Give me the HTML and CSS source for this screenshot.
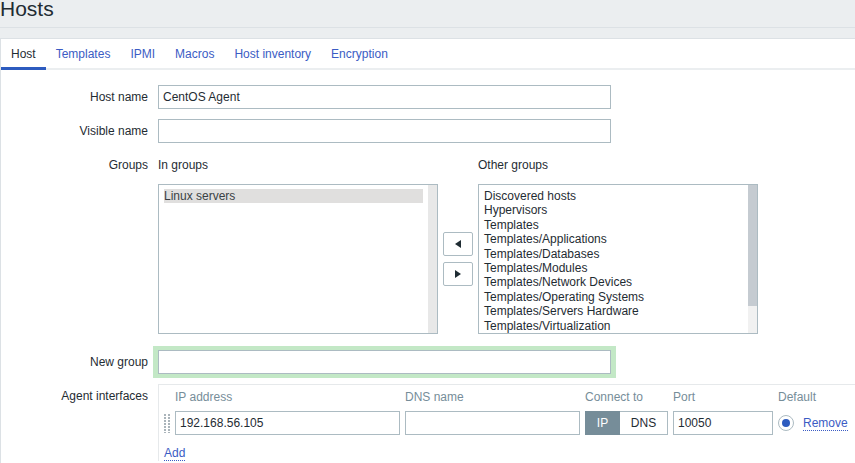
FILE: index.html
```html
<!DOCTYPE html>
<html lang="en">
<head>
<meta charset="utf-8">
<title>Hosts</title>
<link rel="stylesheet" href="styles.css">
</head>
<body>
<header class="page-header"><h1 class="page-title">Hosts</h1></header>
<main class="panel">
  <ul class="tabs">
    <li class="tab active"><a>Host</a></li>
    <li class="tab"><a>Templates</a></li>
    <li class="tab"><a>IPMI</a></li>
    <li class="tab"><a>Macros</a></li>
    <li class="tab"><a>Host inventory</a></li>
    <li class="tab"><a>Encryption</a></li>
  </ul>
  <form class="form">
    <label class="form-label" for="host">Host name</label>
    <div class="form-field"><input class="text-input wide" id="host" value="CentOS Agent"></div>

    <label class="form-label" for="visible">Visible name</label>
    <div class="form-field"><input class="text-input wide" id="visible" value=""></div>

    <div class="form-label">Groups</div>
    <div class="form-field twin">
      <div class="twin-head">In groups</div>
      <div></div>
      <div class="twin-head">Other groups</div>
      <div class="listbox">
        <div class="options">
          <div class="option selected">Linux servers</div>
        </div>
        <div class="scroll"></div>
      </div>
      <div class="move-btns">
        <button type="button" class="move-btn"><svg width="6" height="8" viewBox="0 0 6 8"><polygon points="6,0 6,8 0,4" fill="#1f2c33"/></svg></button>
        <button type="button" class="move-btn"><svg width="6" height="8" viewBox="0 0 6 8"><polygon points="0,0 6,4 0,8" fill="#1f2c33"/></svg></button>
      </div>
      <div class="listbox">
        <div class="options">
          <div class="option">Discovered hosts</div>
          <div class="option">Hypervisors</div>
          <div class="option">Templates</div>
          <div class="option">Templates/Applications</div>
          <div class="option">Templates/Databases</div>
          <div class="option">Templates/Modules</div>
          <div class="option">Templates/Network Devices</div>
          <div class="option">Templates/Operating Systems</div>
          <div class="option">Templates/Servers Hardware</div>
          <div class="option">Templates/Virtualization</div>
        </div>
        <div class="scroll active"><div class="scroll-thumb"></div><div class="scroll-track"></div></div>
      </div>
    </div>

    <label class="form-label" for="newgroup">New group</label>
    <div class="form-field"><input class="text-input wide glow" id="newgroup" value=""></div>

    <div class="form-label">Agent interfaces</div>
    <div class="form-field iface">
      <div class="iface-grid">
        <div></div>
        <div class="iface-head">IP address</div>
        <div class="iface-head">DNS name</div>
        <div class="iface-head">Connect to</div>
        <div class="iface-head">Port</div>
        <div class="iface-head">Default</div>

        <div class="drag"></div>
        <input class="text-input full" value="192.168.56.105">
        <input class="text-input full" value="">
        <div class="connect"><span class="seg on">IP</span><span class="seg off">DNS</span></div>
        <input class="text-input full" value="10050">
        <div class="default-cell"><span class="radio"></span><a class="link">Remove</a></div>
      </div>
      <div class="iface-add"><a class="link">Add</a></div>
    </div>
  </form>
</main>
</body>
</html>
```
FILE: styles.css
```css
* { box-sizing: border-box; }
html, body { margin: 0; overflow: hidden; }
body {
  background: #ebeef0;
  font: 12px "Liberation Sans", Arial, sans-serif;
  color: #1f2c33;
}
.page-header {
  height: 28px;
  border-bottom: 1px solid #dce1e5;
}
.page-title {
  margin: 0;
  font-size: 21px;
  font-weight: normal;
  line-height: 18px;
}
.panel {
  margin-top: 10px;
  background: #fff;
  border-top: 1px solid #dce1e5;
  border-left: 1px solid #dce1e5;
  min-height: 440px;
}
.tabs {
  display: flex;
  margin: 0;
  padding: 0;
  list-style: none;
  border-bottom: 2px solid #ebeef0;
}
.tab { position: relative; }
.tab a {
  display: block;
  padding: 8px 10px 7px;
  line-height: 14px;
  color: #3b5cc4;
}
.tab.active a { color: #1f2c33; }
.tab.active::after {
  content: "";
  position: absolute;
  left: 0;
  right: 0;
  bottom: -2px;
  height: 3px;
  background: #2d5bbf;
}
.form {
  display: grid;
  grid-template-columns: 147px 1fr;
  column-gap: 10px;
  row-gap: 10px;
  padding-top: 15px;
}
.form-label {
  text-align: right;
  line-height: 24px;
}
.text-input {
  height: 24px;
  border: 1px solid #acbbc2;
  padding: 0 4px;
  font: inherit;
  color: #1f2c33;
  background: #fff;
  border-radius: 0;
  outline: none;
  margin: 0;
}
.text-input.wide { width: 453px; }
.text-input.full { width: 100%; }
.glow {
  box-shadow: 0 0 0 4px #c3e8c6, 1px 0 0 4px #c3e8c6, -1px 0 0 4px #c3e8c6;
}
.twin {
  display: grid;
  grid-template-columns: 280px 30px 280px;
  column-gap: 5px;
  row-gap: 7px;
  padding-bottom: 6px;
}
.twin-head { line-height: 24px; }
.listbox {
  height: 150px;
  border: 1px solid #acbbc2;
  display: flex;
  background: #fff;
}
.options {
  flex: 1;
  padding: 4px 5px;
  overflow: hidden;
}
.option {
  line-height: 14.4px;
  white-space: nowrap;
}
.option.selected {
  background: #e0dfde;
  color: #3a3f44;
}
.scroll {
  width: 9px;
  background: #e8e8e8;
  display: flex;
  flex-direction: column;
}
.scroll-thumb { height: 121px; background: #c5cbd1; }
.scroll-track { flex: 1; background: #f1f1f1; }
.move-btns {
  display: flex;
  flex-direction: column;
  gap: 6px;
  align-self: center;
}
.move-btn {
  width: 30px;
  height: 24px;
  border: 1px solid #acbbc2;
  border-radius: 2px;
  background: #fff;
  padding: 0;
  display: flex;
  align-items: center;
  justify-content: center;
}
.iface {
  border-top: 1px solid #e6e9eb;
  border-left: 1px solid #e6e9eb;
  padding-left: 5px;
}
.iface-grid {
  display: grid;
  grid-template-columns: 6px 225px 175px 83px 100px auto;
  column-gap: 5px;
  row-gap: 2px;
  align-items: center;
}
.iface-head {
  color: #768d99;
  line-height: 24px;
}
.drag {
  width: 6px;
  height: 20px;
  background-image: linear-gradient(#fff 1px, transparent 1px), linear-gradient(90deg, #aab4ba 2px, transparent 2px);
  background-size: 4px 3px, 4px 3px;
}
.connect {
  display: flex;
  height: 24px;
}
.seg {
  line-height: 22px;
  text-align: center;
  border: 1px solid #acbbc2;
}
.seg.on {
  width: 35px;
  background: #768d99;
  border-color: #768d99;
  color: #fff;
}
.seg.off {
  width: 48px;
  border-left: 0;
  background: #fff;
}
.default-cell {
  display: flex;
  align-items: center;
  gap: 9px;
}
.radio {
  width: 16px;
  height: 16px;
  border: 1px solid #acbbc2;
  border-radius: 50%;
  display: flex;
  align-items: center;
  justify-content: center;
}
.radio::after {
  content: "";
  width: 8px;
  height: 8px;
  border-radius: 50%;
  background: #2d5bbf;
}
.link {
  color: #3b5cc4;
  border-bottom: 1px dotted #3b5cc4;
  line-height: 14px;
  display: inline-block;
}
.iface-add { padding-top: 11px; }
```
